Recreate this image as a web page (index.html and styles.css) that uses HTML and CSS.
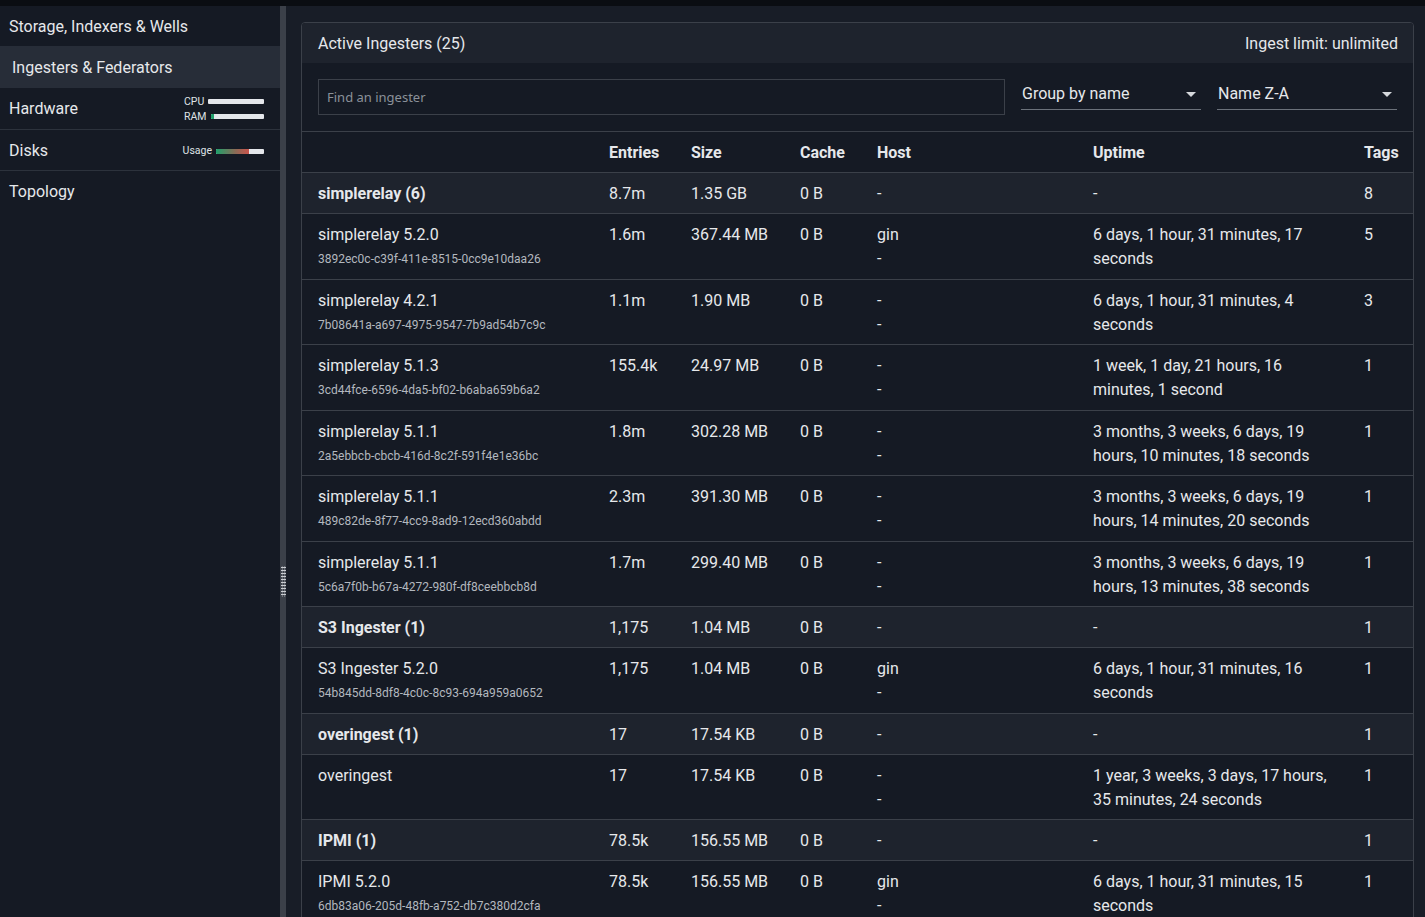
FILE: index.html
```html
<!DOCTYPE html>
<html>
<head>
<meta charset="utf-8">
<link rel="stylesheet" href="styles.css">
</head>
<body>
<div class="topbar"></div>
<div class="app">
  <nav class="sidebar">
    <div class="nav-item">Storage, Indexers &amp; Wells</div>
    <div class="nav-item active">Ingesters &amp; Federators</div>
    <div class="nav-item bordered nav-hw">
      <span>Hardware</span>
      <div class="meters">
        <div class="meter"><span class="mlabel">CPU</span><span class="bar bar-cpu"></span></div>
        <div class="meter"><span class="mlabel">RAM</span><span class="bar bar-ram"><span class="fill-ram"></span></span></div>
      </div>
    </div>
    <div class="nav-item bordered nav-disks">
      <span>Disks</span>
      <div class="meter"><span class="mlabel">Usage</span><span class="bar bar-usage"><span class="fill-usage"></span></span></div>
    </div>
    <div class="nav-item">Topology</div>
  </nav>
  <div class="divider"><span class="grip"></span></div>
  <main class="main">
    <section class="card">
      <header class="card-head">
        <span>Active Ingesters (25)</span>
        <span>Ingest limit: unlimited</span>
      </header>
      <div class="filters">
        <div class="search">Find an ingester</div>
        <div class="select"><span>Group by name</span><span class="caret"></span></div>
        <div class="select"><span>Name Z-A</span><span class="caret"></span></div>
      </div>
      <table class="grid">
        <colgroup>
          <col class="c-name"><col class="c-entries"><col class="c-size"><col class="c-cache"><col class="c-host"><col class="c-uptime"><col class="c-tags">
        </colgroup>
        <thead>
          <tr><th></th><th>Entries</th><th>Size</th><th>Cache</th><th>Host</th><th>Uptime</th><th>Tags</th></tr>
        </thead>
        <tbody>
          <tr class="group"><td>simplerelay (6)</td><td>8.7m</td><td>1.35 GB</td><td>0 B</td><td>-</td><td>-</td><td>8</td></tr>
          <tr><td>simplerelay 5.2.0<div class="uuid">3892ec0c-c39f-411e-8515-0cc9e10daa26</div></td><td>1.6m</td><td>367.44 MB</td><td>0 B</td><td>gin<br>-</td><td class="wrap">6 days, 1 hour, 31 minutes, 17 seconds</td><td>5</td></tr>
          <tr><td>simplerelay 4.2.1<div class="uuid">7b08641a-a697-4975-9547-7b9ad54b7c9c</div></td><td>1.1m</td><td>1.90 MB</td><td>0 B</td><td>-<br>-</td><td class="wrap">6 days, 1 hour, 31 minutes, 4 seconds</td><td>3</td></tr>
          <tr><td>simplerelay 5.1.3<div class="uuid">3cd44fce-6596-4da5-bf02-b6aba659b6a2</div></td><td>155.4k</td><td>24.97 MB</td><td>0 B</td><td>-<br>-</td><td class="wrap">1 week, 1 day, 21 hours, 16 minutes, 1 second</td><td>1</td></tr>
          <tr><td>simplerelay 5.1.1<div class="uuid">2a5ebbcb-cbcb-416d-8c2f-591f4e1e36bc</div></td><td>1.8m</td><td>302.28 MB</td><td>0 B</td><td>-<br>-</td><td class="wrap">3 months, 3 weeks, 6 days, 19 hours, 10 minutes, 18 seconds</td><td>1</td></tr>
          <tr><td>simplerelay 5.1.1<div class="uuid">489c82de-8f77-4cc9-8ad9-12ecd360abdd</div></td><td>2.3m</td><td>391.30 MB</td><td>0 B</td><td>-<br>-</td><td class="wrap">3 months, 3 weeks, 6 days, 19 hours, 14 minutes, 20 seconds</td><td>1</td></tr>
          <tr><td>simplerelay 5.1.1<div class="uuid">5c6a7f0b-b67a-4272-980f-df8ceebbcb8d</div></td><td>1.7m</td><td>299.40 MB</td><td>0 B</td><td>-<br>-</td><td class="wrap">3 months, 3 weeks, 6 days, 19 hours, 13 minutes, 38 seconds</td><td>1</td></tr>
          <tr class="group"><td>S3 Ingester (1)</td><td>1,175</td><td>1.04 MB</td><td>0 B</td><td>-</td><td>-</td><td>1</td></tr>
          <tr><td>S3 Ingester 5.2.0<div class="uuid">54b845dd-8df8-4c0c-8c93-694a959a0652</div></td><td>1,175</td><td>1.04 MB</td><td>0 B</td><td>gin<br>-</td><td class="wrap">6 days, 1 hour, 31 minutes, 16 seconds</td><td>1</td></tr>
          <tr class="group"><td>overingest (1)</td><td>17</td><td>17.54 KB</td><td>0 B</td><td>-</td><td>-</td><td>1</td></tr>
          <tr><td>overingest</td><td>17</td><td>17.54 KB</td><td>0 B</td><td>-<br>-</td><td class="wrap">1 year, 3 weeks, 3 days, 17 hours, 35 minutes, 24 seconds</td><td>1</td></tr>
          <tr class="group"><td>IPMI (1)</td><td>78.5k</td><td>156.55 MB</td><td>0 B</td><td>-</td><td>-</td><td>1</td></tr>
          <tr><td>IPMI 5.2.0<div class="uuid">6db83a06-205d-48fb-a752-db7c380d2cfa</div></td><td>78.5k</td><td>156.55 MB</td><td>0 B</td><td>gin<br>-</td><td class="wrap">6 days, 1 hour, 31 minutes, 15 seconds</td><td>1</td></tr>
        </tbody>
      </table>
    </section>
  </main>
</div>
</body>
</html>
```

FILE: styles.css
```css
* { box-sizing: border-box; }
html, body { margin: 0; padding: 0; height: 100%; overflow: hidden; }
body {
  background: #181d27;
  color: #e6e8eb;
  font-family: Roboto, "Liberation Sans", sans-serif;
  font-size: 16px;
  line-height: 24px;
}
.topbar { height: 6px; background: #0a0d12; }
.app { display: flex; height: calc(100% - 6px); }

.sidebar { width: 280px; flex: none; background: #151a24; }
.nav-item {
  height: 40px;
  padding: 2px 9px 0 9px;
  display: flex;
  align-items: center;
  justify-content: space-between;
}
.nav-item.active { height: 42px; background: #272d38; padding-left: 12px; }
.nav-item.bordered { height: 42px; border-bottom: 1px solid #2c323c; }
.nav-hw { padding-top: 1px; }
.nav-disks { height: 41px !important; }
.meters { display: flex; flex-direction: column; gap: 1px; margin-right: 7px; width: 80px; }
.meter { display: flex; align-items: center; justify-content: space-between; font-size: 10.5px; line-height: 14px; color: #dfe2e6; }
.nav-disks .meter { margin-right: 7px; }
.mlabel { margin-right: 4px; }
.bar { display: block; height: 5px; background: #e4e7eb; border-radius: 1px; position: relative; overflow: hidden; }
.bar-cpu { width: 57px; }
.bar-ram { width: 55px; }
.fill-ram { position: absolute; left: 0; top: 0; bottom: 0; width: 3px; background: #1fa06b; }
.bar-usage { width: 48px; }
.fill-usage { position: absolute; left: 0; top: 0; bottom: 0; width: 33px; background: linear-gradient(90deg, #1fa06b, #8c6a56 60%, #c9544c); }

.divider { width: 6px; flex: none; background: #3b4049; display: flex; align-items: flex-start; justify-content: center; padding-top: 560px; }
.grip {
  width: 5px; height: 31px;
  background-image: radial-gradient(circle, #c9ccd1 0.9px, transparent 1.1px);
  background-size: 2.5px 3px;
}

.main { flex: 1; padding: 16px 11px 0 15px; min-width: 0; }
.card {
  border: 1px solid #3b4049;
  border-radius: 4px;
  background: #151a24;
  overflow: hidden;
}
.card-head {
  height: 40px;
  background: #1e232d;
  display: flex;
  align-items: center;
  justify-content: space-between;
  padding: 2px 15px 0 16px;
}
.filters {
  display: flex;
  gap: 16px;
  padding: 16px;
  border-bottom: 1px solid #3b4049;
  align-items: flex-start;
}
.search {
  flex: 1;
  height: 36px;
  border: 1px solid #3b4049;
  padding: 0 8px;
  display: flex;
  align-items: center;
  font-family: "Noto Sans", "Open Sans", sans-serif;
  font-size: 13px;
  color: #8b9199;
}
.select {
  width: 180px;
  height: 31px;
  border-bottom: 1px solid #6b717a;
  display: flex;
  align-items: center;
  justify-content: space-between;
  padding-left: 1px;
}
.caret {
  width: 0; height: 0;
  border-left: 5px solid transparent;
  border-right: 5px solid transparent;
  border-top: 5px solid #d5d8dc;
  margin-right: 5px;
}

.grid { width: 100%; border-collapse: collapse; table-layout: fixed; }
.c-name { width: 291px; }
.c-entries { width: 82px; }
.c-size { width: 109px; }
.c-cache { width: 77px; }
.c-host { width: 216px; }
.c-uptime { width: 271px; }
.c-tags { width: 65px; }
.grid th, .grid td {
  text-align: left;
  vertical-align: top;
  padding: 9px 16px 7px 16px;
  font-size: 16px;
  line-height: 24px;
  white-space: nowrap;
}
.grid td.wrap { white-space: normal; }
.grid th { font-weight: 700; }
.grid td { border-top: 1px solid #3b4049; }
.grid tr.group td { background: #1e232d; font-weight: 400; }
.grid tr.group td:first-child { font-weight: 700; }
.uuid { font-size: 12px; line-height: 24.5px; color: #b3b8bf; }
```
